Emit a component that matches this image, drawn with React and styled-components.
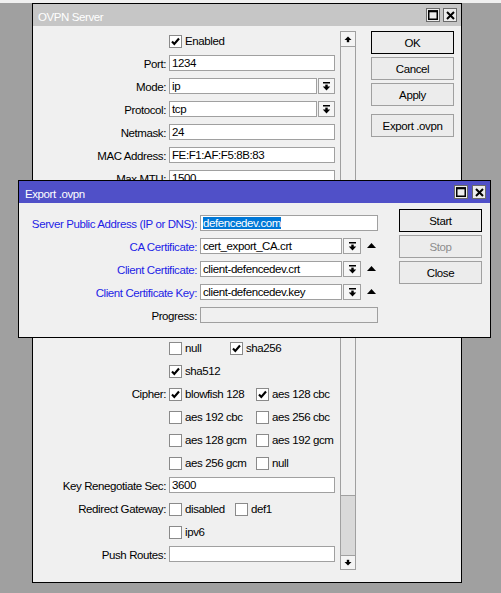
import React from 'react';
import styled, { createGlobalStyle } from 'styled-components';

const GlobalStyle = createGlobalStyle`
  html, body { margin: 0; padding: 0; background: #a0a0a0; }
  body {
    font-family: "Liberation Sans", Arial, sans-serif;
    font-size: 11.5px;
    letter-spacing: -0.4px;
    color: #000;
  }
`;

const Desktop = styled.div`
  position: relative;
  width: 501px;
  height: 593px;
  overflow: hidden;
  background: linear-gradient(#f0f0f0 0 3px, #a0a0a0 3px);
`;

const Win = styled.div`
  position: absolute;
  left: ${p => p.$x}px;
  top: ${p => p.$y}px;
  width: ${p => p.$w}px;
  height: ${p => p.$h}px;
  box-sizing: border-box;
  border: 1px solid #000;
  background: #f0f0f0;
  display: flex;
  flex-direction: column;
`;

const TitleBar = styled.div`
  height: 22px;
  flex-shrink: 0;
  display: flex;
  align-items: center;
  justify-content: space-between;
  background: ${p => (p.$active ? '#5050c8' : '#c6c6c6')};
  padding: 0 4px 0 ${p => p.$pl}px;
`;

const TitleText = styled.div`
  color: #fff;
  line-height: 16px;
  padding-top: 3px;
`;

const TitleBtns = styled.div`
  display: flex;
  gap: ${p => p.$gap}px;
`;

const TitleBtn = styled.div`
  width: 14px;
  height: 14px;
  box-sizing: border-box;
  border: 1px solid #6a6a6a;
  background: #ececec;
  display: flex;
  align-items: center;
  justify-content: center;
`;

const Body = styled.div`
  flex: 1;
  display: flex;
  align-items: flex-start;
  padding-top: ${p => p.$pt}px;
`;

const Form = styled.div`
  display: flex;
  flex-direction: column;
  width: ${p => p.$w}px;
  margin-top: ${p => p.$mt || 0}px;
  flex-shrink: 0;
`;

const Row = styled.div`
  display: flex;
  align-items: flex-start;
  height: 23px;
  flex-shrink: 0;
`;

const Spacer = styled.div`
  height: ${p => p.$h}px;
  flex-shrink: 0;
`;

const Label = styled.div`
  width: ${p => p.$w}px;
  flex-shrink: 0;
  margin-right: 3px;
  margin-top: 2px;
  line-height: 16px;
  text-align: right;
  white-space: nowrap;
  color: ${p => (p.$blue ? '#1e1ee6' : '#000')};
`;

const Field = styled.div`
  width: ${p => p.$w}px;
  height: 16px;
  margin-top: 1px;
  box-sizing: border-box;
  border: 1px solid #a0a0a0;
  background: ${p => (p.$disabled ? '#f0f0f0' : '#fff')};
  padding: 0 2px;
  line-height: 15px;
  white-space: nowrap;
  overflow: hidden;
  flex-shrink: 0;
`;

const Selected = styled.span`
  background: #0078d7;
  color: #fff;
`;

const DropBtn = styled.div`
  width: ${p => p.$w}px;
  height: 16px;
  margin-top: 1px;
  margin-left: 1px;
  box-sizing: border-box;
  border: 1px solid #a0a0a0;
  background: #f6f6f6;
  display: flex;
  align-items: center;
  justify-content: center;
  flex-shrink: 0;
`;

const UpMark = styled.svg`
  margin-left: 6px;
  margin-top: 6px;
  flex-shrink: 0;
`;

const Checks = styled.div`
  display: flex;
`;

const CheckItem = styled.div`
  display: flex;
  align-items: flex-start;
  width: ${p => (p.$w ? `${p.$w}px` : 'auto')};
  flex-shrink: 0;
`;

const Box = styled.div`
  width: 13px;
  height: 13px;
  margin-top: 4px;
  box-sizing: border-box;
  border: 1px solid #8a8a8a;
  background: #fff;
  display: flex;
  align-items: center;
  justify-content: center;
  flex-shrink: 0;
`;

const CheckText = styled.div`
  margin-left: 3px;
  margin-top: 2px;
  line-height: 16px;
  white-space: nowrap;
`;

const ScrollBar = styled.div`
  width: 16px;
  height: 539px;
  margin-left: 5px;
  box-sizing: border-box;
  border: 1px solid #a0a0a0;
  display: flex;
  flex-direction: column;
  flex-shrink: 0;
`;

const ScrollBtn = styled.div`
  height: ${p => p.$h}px;
  flex-shrink: 0;
  background: #f4f4f4;
  display: flex;
  align-items: center;
  justify-content: center;
  border-top: ${p => (p.$down ? '1px solid #a0a0a0' : 'none')};
  border-bottom: ${p => (p.$down ? 'none' : '1px solid #a0a0a0')};
`;

const Track = styled.div`
  flex: 1;
  background: #f0f0f0;
`;

const Thumb = styled.div`
  height: 59px;
  flex-shrink: 0;
  border-top: 1px solid #a0a0a0;
  background: #d9d9d9;
`;

const ButtonCol = styled.div`
  display: flex;
  flex-direction: column;
  margin-left: ${p => p.$ml}px;
  flex-shrink: 0;
`;

const Button = styled.div`
  width: 83px;
  height: 23px;
  box-sizing: border-box;
  margin-top: ${p => p.$mt || 0}px;
  border: 1px solid ${p => (p.$default ? '#000' : '#a0a0a0')};
  background: #ececec;
  color: ${p => (p.$disabled ? '#8c8c8c' : '#000')};
  display: flex;
  align-items: center;
  justify-content: center;
  white-space: nowrap;
`;

const Check = () => (
  <svg width="11" height="11" viewBox="0 0 11 11">
    <polyline points="2,5.5 4.3,8 9,2.5" fill="none" stroke="#000" strokeWidth="2.1" />
  </svg>
);

const DropIcon = () => (
  <svg width="9" height="9" viewBox="0 0 9 9">
    <rect x="1" y="0" width="7" height="1.5" fill="#000" />
    <rect x="3.3" y="2.6" width="2.4" height="2.4" fill="#000" />
    <polygon points="0.8,4.6 8.2,4.6 4.5,8.6" fill="#000" />
  </svg>
);

const ArrowUp = () => (
  <svg width="8" height="7" viewBox="0 0 8 7">
    <polygon points="0.5,4 4,0.5 7.5,4" fill="#000" />
    <rect x="2.8" y="3.8" width="2.4" height="2.4" fill="#000" />
  </svg>
);

const ArrowDown = () => (
  <svg width="8" height="7" viewBox="0 0 8 7">
    <rect x="2.8" y="0.8" width="2.4" height="2.4" fill="#000" />
    <polygon points="0.5,3 7.5,3 4,6.5" fill="#000" />
  </svg>
);

const MaxIcon = () => (
  <svg width="10" height="10" viewBox="0 0 10 10">
    <rect x="0.75" y="1" width="8.5" height="8.25" fill="none" stroke="#000" strokeWidth="1.5" />
    <rect x="0" y="0.3" width="10" height="2" fill="#000" />
  </svg>
);

const CloseIcon = () => (
  <svg width="9" height="9" viewBox="0 0 9 9">
    <path d="M1 1 L8 8 M8 1 L1 8" stroke="#000" strokeWidth="2" />
  </svg>
);

const WinButtons = ({ gap }) => (
  <TitleBtns $gap={gap}>
    <TitleBtn><MaxIcon /></TitleBtn>
    <TitleBtn><CloseIcon /></TitleBtn>
  </TitleBtns>
);

const CB = ({ checked, text, w }) => (
  <CheckItem $w={w}>
    <Box>{checked && <Check />}</Box>
    <CheckText>{text}</CheckText>
  </CheckItem>
);

const LW = 133;

const FieldRow = ({ label, value, drop }) => (
  <Row>
    <Label $w={LW}>{label}</Label>
    {drop ? (
      <>
        <Field $w={148}>{value}</Field>
        <DropBtn $w={17}><DropIcon /></DropBtn>
      </>
    ) : (
      <Field $w={166}>{value}</Field>
    )}
  </Row>
);

const CheckRow = ({ label, items }) => (
  <Row>
    <Label $w={LW}>{label}</Label>
    <Checks>
      {items.map((it, i) => (
        <CB key={i} checked={it.c} text={it.t} w={it.w} />
      ))}
    </Checks>
  </Row>
);

const DLW = 178;

const DialogRow = ({ label, blue, children }) => (
  <Row>
    <Label $w={DLW} $blue={blue}>{label}</Label>
    {children}
  </Row>
);

const TriUp = () => (
  <UpMark width="9" height="5" viewBox="0 0 9 5">
    <polygon points="0,5 4.5,0 9,5" fill="#000" />
  </UpMark>
);

export default function App() {
  return (
    <>
      <GlobalStyle />
      <Desktop>
        <Win $x={32} $y={3} $w={430} $h={580}>
          <TitleBar $pl={5}>
            <TitleText>OVPN Server</TitleText>
            <WinButtons gap={3} />
          </TitleBar>
          <Body $pt={5}>
            <Form $w={302}>
              <CheckRow label="" items={[{ c: true, t: 'Enabled' }]} />
              <FieldRow label="Port:" value="1234" />
              <FieldRow label="Mode:" value="ip" drop />
              <FieldRow label="Protocol:" value="tcp" drop />
              <FieldRow label="Netmask:" value="24" />
              <FieldRow label="MAC Address:" value="FE:F1:AF:F5:8B:83" />
              <FieldRow label="Max MTU:" value="1500" />
              {/* rows hidden under the Export .ovpn dialog */}
              <Spacer $h={146} />
              <CheckRow label="" items={[{ c: false, t: 'null', w: 61 }, { c: true, t: 'sha256' }]} />
              <CheckRow label="" items={[{ c: true, t: 'sha512' }]} />
              <CheckRow label="Cipher:" items={[{ c: true, t: 'blowfish 128', w: 87 }, { c: true, t: 'aes 128 cbc' }]} />
              <CheckRow label="" items={[{ c: false, t: 'aes 192 cbc', w: 87 }, { c: false, t: 'aes 256 cbc' }]} />
              <CheckRow label="" items={[{ c: false, t: 'aes 128 gcm', w: 87 }, { c: false, t: 'aes 192 gcm' }]} />
              <CheckRow label="" items={[{ c: false, t: 'aes 256 gcm', w: 87 }, { c: false, t: 'null' }]} />
              <FieldRow label="Key Renegotiate Sec:" value="3600" />
              <CheckRow label="Redirect Gateway:" items={[{ c: false, t: 'disabled', w: 66 }, { c: false, t: 'def1' }]} />
              <CheckRow label="" items={[{ c: false, t: 'ipv6' }]} />
              <FieldRow label="Push Routes:" value="" />
            </Form>
            <ScrollBar>
              <ScrollBtn $h={14}><ArrowUp /></ScrollBtn>
              <Track />
              <Thumb />
              <ScrollBtn $h={13} $down><ArrowDown /></ScrollBtn>
            </ScrollBar>
            <ButtonCol $ml={15}>
              <Button $default>OK</Button>
              <Button $mt={3}>Cancel</Button>
              <Button $mt={3}>Apply</Button>
              <Button $mt={8}>Export .ovpn</Button>
            </ButtonCol>
          </Body>
        </Win>

        <Win $x={18} $y={180} $w={473} $h={158}>
          <TitleBar $active $pl={6}>
            <TitleText>Export .ovpn</TitleText>
            <WinButtons gap={4} />
          </TitleBar>
          <Body $pt={6}>
            <Form $w={359} $mt={5}>
              <DialogRow label="Server Public Address (IP or DNS):" blue>
                <Field $w={178}><Selected>defencedev.com</Selected></Field>
              </DialogRow>
              <DialogRow label="CA Certificate:" blue>
                <Field $w={142}>cert_export_CA.crt</Field>
                <DropBtn $w={18}><DropIcon /></DropBtn>
                <TriUp />
              </DialogRow>
              <DialogRow label="Client Certificate:" blue>
                <Field $w={142}>client-defencedev.crt</Field>
                <DropBtn $w={18}><DropIcon /></DropBtn>
                <TriUp />
              </DialogRow>
              <DialogRow label="Client Certificate Key:" blue>
                <Field $w={142}>client-defencedev.key</Field>
                <DropBtn $w={18}><DropIcon /></DropBtn>
                <TriUp />
              </DialogRow>
              <DialogRow label="Progress:">
                <Field $w={178} $disabled />
              </DialogRow>
            </Form>
            <ButtonCol $ml={21}>
              <Button $default>Start</Button>
              <Button $mt={3} $disabled>Stop</Button>
              <Button $mt={3}>Close</Button>
            </ButtonCol>
          </Body>
        </Win>
      </Desktop>
    </>
  );
}
